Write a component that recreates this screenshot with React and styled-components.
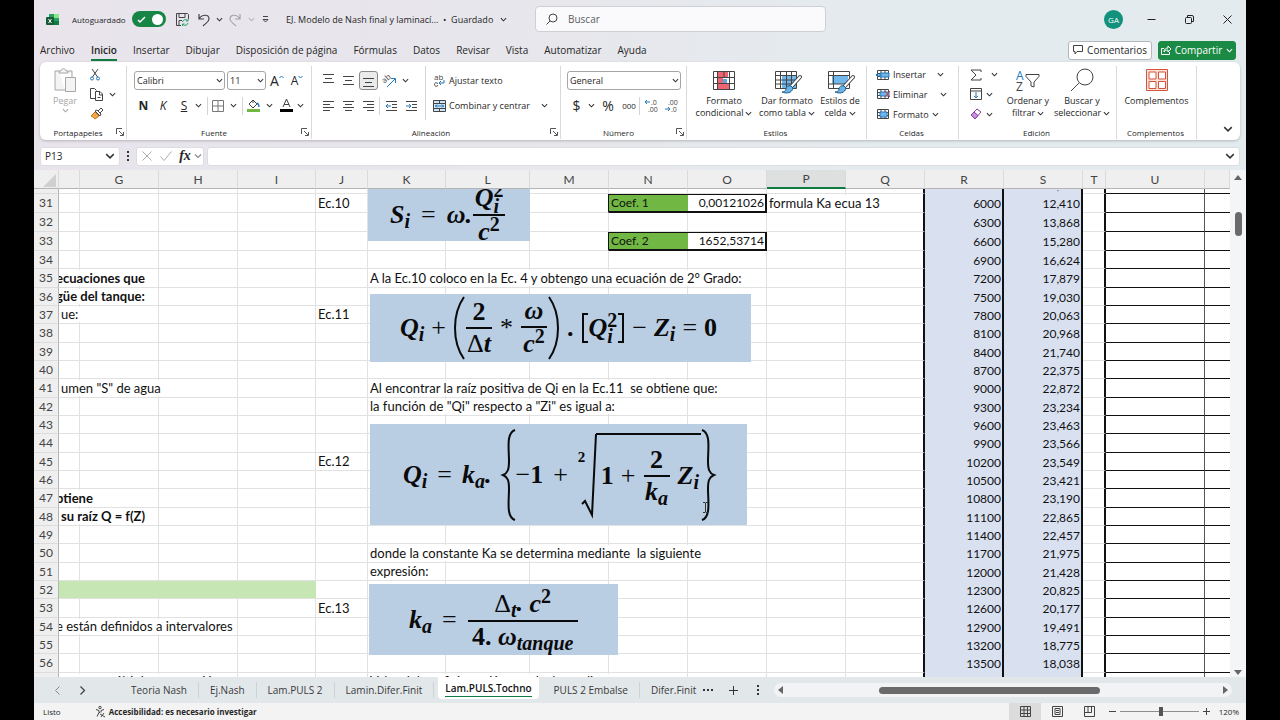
import React from 'react';
import styled, { createGlobalStyle } from 'styled-components';

const GlobalStyle = createGlobalStyle`
	* {
		box-sizing: border-box;
	}
	body {
		margin: 0;
		background: #000;
		color: #262626;
		font-family: "Open Sans", "Noto Sans", sans-serif;
		font-size: 9px;
	}
	button, input, select {
		font: inherit;
		color: inherit;
		margin: 0;
	}
`;

const Window = styled.div`
	display: flex;
	flex-direction: column;
	height: 100vh;
	margin: 0 34px;
	overflow: hidden;
	background: linear-gradient(90deg, #e9e4ec 0%, #e7e7ec 45%, #e4ebee 70%, #e4ebee 100%);
`;

/* ---------- shared ---------- */

const PlainButton = styled.button`
	display: flex;
	align-items: center;
	justify-content: center;
	flex: none;
	padding: 0;
	border: 0;
	background: none;
	white-space: nowrap;
	width: ${props => props.$w ? props.$w + 'px' : 'auto'};
	height: ${props => props.$h ? props.$h + 'px' : 'auto'};
`;

const Svg = styled.svg`
	display: block;
	flex: none;
	fill: none;
	stroke: ${props => props.$c || '#444'};
	stroke-width: 1;
	overflow: visible;
`;

const Icon = ({ w = 16, h = 16, c, children }) => (
	<Svg width={w} height={h} viewBox={`0 0 ${w} ${h}`} $c={c} aria-hidden="true">{children}</Svg>
);

const Chevron = ({ size = 7, c = '#333' }) => (
	<Svg width={size} height={size} viewBox="0 0 8 8" $c={c} aria-hidden="true">
		<path d="M1 2.5 4 5.5 7 2.5" strokeWidth="1.2" />
	</Svg>
);

/* ---------- title bar ---------- */

const TitleBar = styled.header`
	display: flex;
	align-items: center;
	flex: none;
	height: 38px;
`;

const TitleLeft = styled.div`
	display: flex;
	align-items: center;
	flex: 0 0 501px;
	padding-left: 12px;
`;

const AutoSave = styled.label`
	display: flex;
	align-items: center;
	justify-content: space-between;
	width: 94px;
	margin: 0 6px 0 13px;
	font-size: 8px;
`;

const SwitchBox = styled.span`
	display: grid;
	align-items: center;

	input, svg {
		grid-area: 1 / 1;
	}
	svg {
		margin-left: 5px;
		pointer-events: none;
	}
`;

const Switch = styled.input`
	appearance: none;
	display: flex;
	align-items: center;
	justify-content: flex-end;
	width: 34px;
	height: 16px;
	padding: 0 3px;
	border-radius: 8px;
	background: #168546;

	&::after {
		content: "";
		width: 11px;
		height: 11px;
		border-radius: 50%;
		background: #fff;
	}
`;

const FileName = styled.button`
	display: flex;
	align-items: center;
	gap: 4px;
	margin-left: 10px;
	padding: 0;
	border: 0;
	background: none;
	white-space: pre;
`;

const SearchBox = styled.label`
	display: flex;
	align-items: center;
	gap: 10px;
	flex: 0 1 291px;
	height: 26px;
	padding: 0 10px;
	border: 1px solid #cfd0d4;
	border-radius: 4px;
	background: #fafafc;

	input {
		flex: 1;
		min-width: 0;
		padding: 0;
		border: 0;
		outline: 0;
		background: none;
		font-size: 10px;
	}
	input::placeholder {
		color: #5c5c5c;
	}
`;

const WindowButtons = styled.div`
	display: flex;
	align-items: center;
	margin-left: auto;
`;

const Avatar = styled.button`
	width: 19px;
	height: 19px;
	margin-right: 9px;
	padding: 0;
	border: 0;
	border-radius: 50%;
	background: #12917d;
	color: #fff;
	font-size: 8px;
`;

/* ---------- ribbon tabs ---------- */

const TabRow = styled.nav`
	display: flex;
	align-items: center;
	flex: none;
	gap: 16px;
	height: 24px;
	padding: 0 10px 0 6px;
`;

const RibbonTab = styled.button`
	height: 22px;
	padding: 2px 0 0;
	border: 0;
	border-bottom: 2px solid ${props => props.$active ? '#107c41' : 'transparent'};
	background: none;
	font-size: 10px;
	font-weight: ${props => props.$active ? 600 : 400};
	white-space: nowrap;
`;

const TabActions = styled.div`
	display: flex;
	gap: 6px;
	margin-left: auto;
`;

const ActionButton = styled.button`
	display: flex;
	align-items: center;
	justify-content: center;
	gap: 4px;
	width: ${props => props.$primary ? 78 : 84}px;
	height: 19px;
	padding: 0;
	border: 1px solid ${props => props.$primary ? '#1a8a44' : '#b5b7ba'};
	border-radius: 3px;
	background: ${props => props.$primary ? '#1a8a44' : '#fff'};
	color: ${props => props.$primary ? '#fff' : '#262626'};
	font-size: 10px;
`;

/* ---------- ribbon ---------- */

const Ribbon = styled.section`
	display: flex;
	flex: none;
	height: 78px;
	margin: 0 6px;
	border-radius: 6px;
	background: #fff;
	box-shadow: 0 1px 3px rgba(0, 0, 0, 0.22);
`;

const Group = styled.div`
	display: flex;
	flex-direction: column;
	flex: 0 0 ${props => props.$w}px;
	min-width: 0;
	margin: 4px 0 1px;
	border-right: 1px solid #d9d9d9;
`;

const GroupBody = styled.div`
	display: flex;
	flex: 1;
	min-width: 0;
	padding: 0 0 0 ${props => props.$pad || 0}px;
`;

const GroupLabel = styled.div`
	display: flex;
	align-items: center;
	height: 14px;
	padding-right: 2px;
	font-size: 8px;

	span {
		flex: 1;
		text-align: center;
	}
`;

const Stack = styled.div`
	display: flex;
	flex-direction: column;
	flex: none;
	width: ${props => props.$w ? props.$w + 'px' : 'auto'};
	padding-top: ${props => props.$top || 0}px;
`;

const ToolRow = styled.div`
	display: flex;
	align-items: center;
	gap: ${props => props.$gap || 0}px;
	height: ${props => props.$h || 25}px;
`;

const Divider = styled.span`
	width: 1px;
	height: ${props => props.$h || 18}px;
	margin: ${props => props.$m || '0'};
	background: #d4d4d4;
`;

const BigButton = styled.button`
	display: flex;
	flex-direction: column;
	align-items: center;
	flex: none;
	width: ${props => props.$w}px;
	height: 56px;
	padding: 2px 0 0;
	border: 0;
	background: none;
	color: ${props => props.$disabled ? '#a6a6a6' : '#262626'};
	line-height: 12px;

	> span {
		display: flex;
		align-items: center;
		gap: 2px;
		white-space: nowrap;
	}
	> svg {
		margin-bottom: 3px;
	}
`;

const TextButton = styled.button`
	display: flex;
	align-items: center;
	gap: 3px;
	height: 20px;
	padding: 0;
	border: 0;
	background: none;
	white-space: nowrap;
	width: ${props => props.$w ? props.$w + 'px' : 'auto'};

	> svg:last-child:not(:first-child) {
		margin-left: ${props => props.$push ? 'auto' : '0'};
	}
`;

const Letter = styled.span`
	font-size: ${props => props.$size || 12}px;
	font-weight: ${props => props.$bold ? 700 : 400};
	font-style: ${props => props.$italic ? 'italic' : 'normal'};
	text-decoration: ${props => props.$under ? 'underline' : 'none'};
	line-height: 12px;
`;

const SelectWrap = styled.span`
	display: grid;
	align-items: center;
	justify-items: end;
	width: ${props => props.$w}px;

	select, svg {
		grid-area: 1 / 1;
	}
	svg {
		margin-right: 2px;
		pointer-events: none;
	}
`;

const Select = styled.select`
	appearance: none;
	width: 100%;
	height: 19px;
	padding: 0 2px;
	border: 1px solid #a5a5a5;
	border-radius: 3px;
	background: #fff;
`;

const PressedBox = styled.span`
	display: grid;
	place-items: center;
	width: 19px;
	height: 19px;
	border: 1px solid #8a8a8a;
	border-radius: 3px;
	background: #ebebeb;
`;

/* ---------- formula bar ---------- */

const FormulaBar = styled.div`
	display: flex;
	align-items: center;
	flex: none;
	height: 30px;
	padding: 2px 6px 0;
`;

const BarBox = styled.div`
	display: flex;
	align-items: center;
	height: 19px;
	width: ${props => props.$w ? props.$w + 'px' : 'auto'};
	flex: ${props => props.$w ? 'none' : '1'};
	padding: 0 4px;
	border: 1px solid #dcdde0;
	border-radius: 3px;
	background: #fff;

	input {
		flex: 1;
		min-width: 0;
		padding: 0;
		border: 0;
		outline: 0;
		background: none;
		font-size: 10px;
	}
`;

/* ---------- sheet ---------- */

const SheetArea = styled.main`
	position: relative;
	display: flex;
	flex: 1;
	min-height: 0;
	overflow: hidden;
	background: #fff;
`;

const GridClip = styled.div`
	flex: 1;
	min-width: 0;
	overflow: hidden;
`;

const Grid = styled.table`
	width: 100%;
	table-layout: fixed;
	border-collapse: separate;
	border-spacing: 0;
	font-family: Lato, "Open Sans", sans-serif;
	font-size: 12px;
	color: #111;
`;

const ColHead = styled.th`
	height: 19px;
	padding: 0;
	border-right: 1px solid #dadada;
	border-bottom: ${props => props.$on ? '2px solid #107c41' : '1px solid #b4b4b4'};
	background: ${props => props.$on ? '#dedfdf' : '#efefef'};
	color: #444;
	font-weight: 400;
	line-height: 17px;
`;

const RowHead = styled.th`
	position: relative;
	z-index: 2;
	padding: 0;
	border-right: 1px solid #b4b4b4;
	border-bottom: 1px solid #dcdcdc;
	background: #efefef;
	color: #444;
	font-weight: 400;
`;

const SheetRow = styled.tr`
	height: ${props => props.$h}px;
	line-height: ${props => Math.max(props.$h - 3, 2)}px;
`;

const fills = { green: '#70b843', light: '#c6e6b4', blue: '#d9e1f1' };

const Cell = styled.td`
	padding: 0 ${props => props.$right ? 1 : 2}px;
	border-right: ${props => props.$edge || '1px solid #e1e1e1'};
	border-bottom: ${props => props.$base || '1px solid #e1e1e1'};
	border-top: ${props => props.$cap || '0'};
	background: ${props => fills[props.$fill] || 'transparent'};
	text-align: ${props => props.$right ? 'right' : 'left'};
	white-space: pre;
`;

const Peek = styled.div`
	display: flex;
	align-items: flex-end;
	justify-content: ${props => props.$right ? 'flex-end' : 'center'};
	height: 4px;
	overflow: hidden;
	line-height: 16px;
`;

const Spill = styled.span`
	position: relative;
	z-index: 1;
	display: inline-block;
	margin-left: ${props => props.$cut ? -5 : 0}px;
	padding-right: 3px;
	background: #fff;
	font-size: 13px;
	font-weight: ${props => props.$bold ? 700 : 400};
	vertical-align: top;
`;

const VScroll = styled.div`
	display: flex;
	flex-direction: column;
	align-items: center;
	flex: 0 0 16px;
	padding: 4px 0 0;
	background: #f4f5f6;
`;

const VThumb = styled.div`
	width: 7px;
	height: 24px;
	margin: 30px 0 auto;
	border-radius: 4px;
	background: #6a6a6a;
`;

/* ---------- equations floating over the cells ---------- */

const PictureLayer = styled.div`
	position: absolute;
	z-index: 1;
	top: 19px;
	right: 16px;
	bottom: 0;
	left: 25px;
	overflow: hidden;
	pointer-events: none;
`;

const Picture = styled.div`
	position: absolute;
	top: ${props => props.$y}px;
	left: ${props => props.$x}px;
	display: flex;
	align-items: center;
	gap: ${props => props.$gap || 10}px;
	width: ${props => props.$w}px;
	height: ${props => props.$h}px;
	padding-left: ${props => props.$pad || 30}px;
	background: #b9cde3;
	color: #0a0a0a;
	font-family: "Liberation Serif", serif;
	font-size: 26px;
	font-weight: 700;
	font-style: italic;
	line-height: 30px;
	white-space: nowrap;
`;

const Up = styled.span`
	font-style: normal;
`;

const Op = styled.span`
	font-style: normal;
	font-weight: 400;
`;

const Var = styled.span`
	display: inline-flex;
	align-items: center;
`;

const Scripts = styled.span`
	display: inline-flex;
	flex-direction: column;
	justify-content: ${props => props.$sub ? 'flex-end' : 'space-between'};
	height: ${props => props.$sub ? 28 : 32}px;
	font-size: 20px;
	line-height: 16px;
`;

const Frac = styled.span`
	display: inline-flex;
	flex-direction: column;
	align-items: center;
	min-width: ${props => props.$w || 26}px;
	margin: 0 1px;

	> span:first-child {
		width: 100%;
		display: flex;
		justify-content: center;
		border-bottom: 2px solid #0a0a0a;
	}
`;

const Radicand = styled.span`
	display: flex;
	align-items: center;
	gap: 7px;
	height: 84px;
	padding: 0 2px 0 5px;
	border-top: 2px solid #0a0a0a;
`;

const Root = styled.span`
	display: flex;
	align-items: flex-start;
`;

const RootIndex = styled.span`
	font-size: 15px;
	font-style: normal;
	line-height: 16px;
	width: 10px;
	margin-top: 16px;
`;

/* ---------- sheet tabs + status ---------- */

const BottomBar = styled.div`
	display: flex;
	align-items: center;
	flex: none;
	height: 26px;
	background: #e2e7ea;
`;

const TabArrows = styled.div`
	display: flex;
	flex: 0 0 86px;
	padding-left: 11px;
`;

const SheetTab = styled.button`
	height: ${props => props.$active ? 22 : 16}px;
	align-self: ${props => props.$active ? 'flex-start' : 'center'};
	padding: 0 ${props => props.$active ? 7 : 11}px;
	margin: 0 ${props => props.$active ? 4 : 0}px;
	border: 0;
	border-right: ${props => props.$active ? '0' : '1px solid #cdd2d5'};
	border-radius: ${props => props.$active ? '0 0 4px 4px' : '0'};
	background: ${props => props.$active ? '#fff' : 'none'};
	font-size: 10px;
	line-height: 16px;
	font-weight: ${props => props.$active ? 600 : 400};
	color: ${props => props.$active ? '#111' : '#3a3a3a'};
	white-space: nowrap;

	span {
		display: block;
		border-bottom: ${props => props.$active ? '1px solid #107c41' : '0'};
	}
`;

const HScroll = styled.div`
	display: flex;
	align-items: center;
	flex: 1;
	height: 14px;
	margin: 0 14px 0 4px;
	padding: 0 3px;
	border-radius: 7px;
	background: #f1f3f4;
`;

const HThumb = styled.div`
	flex: 0 1 221px;
	height: 7px;
	margin-left: 94px;
	margin-right: auto;
	border-radius: 4px;
	background: #6a6a6a;
`;

const StatusBar = styled.footer`
	display: flex;
	align-items: center;
	flex: none;
	height: 17px;
	padding: 0 7px 0 9px;
	background: #f3f3f3;
	font-size: 8px;
`;

const AccessNote = styled.button`
	display: flex;
	align-items: center;
	gap: 3px;
	margin: 0 auto 0 34px;
	padding: 0;
	border: 0;
	background: none;
	font-weight: 700;
`;

const ViewButton = styled.button`
	display: grid;
	place-items: center;
	width: 32px;
	height: 17px;
	padding: 0;
	border: 0;
	background: ${props => props.$on ? '#dcdcdc' : 'none'};
`;

const Zoom = styled.input`
	appearance: none;
	width: 79px;
	height: 12px;
	background: linear-gradient(#8f8f8f, #8f8f8f) center / 100% 1px no-repeat;

	&::-webkit-slider-thumb {
		appearance: none;
		width: 4px;
		height: 9px;
		background: #555;
	}
`;

const ZoomValue = styled.span`
	width: 26px;
	text-align: right;
`;

/* ---------- icons ---------- */

const Launcher = () => (
	<PlainButton aria-label="Más opciones">
		<Icon w={8} h={8} c="#555"><path d="M.5 6V.5H6M3 3l4 4M7.500 4v3.500H4" /></Icon>
	</PlainButton>
);

const lineSets = {
	top: [[1, 12], [3, 10], [1, 12]],
	left: [[1, 12], [1, 8], [1, 12], [1, 8]],
	center: [[1, 12], [3, 10], [1, 12], [3, 10]],
	right: [[1, 12], [5, 12], [1, 12], [5, 12]],
};

const Lines = ({ kind, shift = 0 }) => {
	const set = lineSets[kind];
	const step = set.length === 3 ? 4 : 3;
	return (
		<Icon w={13} h={12}>
			{set.map((l, i) => <path key={i} d={`M${l[0]} ${i * step + 1.5 + shift}H${l[1]}`} />)}
		</Icon>
	);
};

const Indent = ({ out }) => (
	<Icon w={13} h={12}>
		<path d="M1 1.500H12M7 4.500H12M7 7.500H12M1 10.500H12" />
		<path d={out ? 'M6 6H1M3 4 1 6l2 2' : 'M1 6H6M4 4l2 2-2 2'} stroke="#2477b8" />
	</Icon>
);

const Brush = () => (
	<>
		<path d="M26 7 17 17" stroke="#444" strokeWidth="4" strokeLinecap="round" />
		<path d="M26 7 17 17" stroke="#fff" strokeWidth="2" strokeLinecap="round" />
		<path d="M17 16c-3-1-5 1-5 3s-2 3-4 3c5 2 10 1 11-4z" fill="#69b3e7" stroke="#245d8a" />
	</>
);

const FormatIcon = () => (
	<Icon w={24} h={20}>
		<path d="M5 1h11v5H5zM5 13h13v5H5z" fill="#ee6473" stroke="none" />
		<path d="M5 6h6v7H5z" fill="#ee6473" stroke="none" />
		<path d="M11 8h4v4h-4z" fill="#5fa8dd" stroke="none" />
		<path d="M1.500.500h21v18h-21zM1.500 6.500h21M1.500 12.500h21M5.500.500v18M12 .500v6M17.500.500v18" />
	</Icon>
);

const TableIcon = ({ cell }) => (
	<Icon w={26} h={22}>
		<path d={cell ? 'M5 5h16v9H5z' : 'M8 6h15v12H8z'} fill="#71b7ea" stroke="none" />
		<path d="M1.500 1.500h21v17h-21zM1.500 5.500h21M1.500 14h21M6.500 1.500v17" />
		{!cell && <path d="M1.500 10h21M12.500 1.500v17M17.500 1.500v17" />}
		<Brush />
	</Icon>
);

const CellIcon = ({ kind }) => (
	<Icon w={14} h={12}>
		<path d="M1.500 1.500h11v9h-11zM1.500 4.500h11M1.500 7.500h11M5 1.500v9M9 1.500v9" />
		<path d={kind === 'format' ? 'M4 4h7v5H4z' : 'M4 4h9v4H4z'} fill="#71b7ea" stroke="#2477b8" />
		{kind === 'insert' && <path d="M6 6H0M2 4 0 6l2 2" stroke="#2477b8" />}
		{kind === 'delete' && <path d="m9 3 5 6M14 3 9 9" stroke="#d13438" />}
	</Icon>
);

const Arrow = ({ d }) => (
	<Svg width="8" height="8" viewBox="0 0 8 8" aria-hidden="true"><path d={d} fill="#666" stroke="none" /></Svg>
);

/* ---------- data ---------- */

const ribbonTabs = ['Archivo', 'Inicio', 'Insertar', 'Dibujar', 'Disposición de página', 'Fórmulas', 'Datos', 'Revisar', 'Vista', 'Automatizar', 'Ayuda'];

const columns = [
	['F', 21], ['G', 79], ['H', 79], ['I', 78], ['J', 52], ['K', 78], ['L', 84], ['M', 79], ['N', 79], ['O', 79],
	['P', 79], ['Q', 79], ['R', 79], ['S', 79], ['T', 23], ['U', 99], ['V', null],
];

const flow = ['12,410', '13,868', '15,280', '16,624', '17,879', '19,030', '20,063', '20,968', '21,740', '22,375', '22,872', '23,234', '23,463', '23,566', '23,549', '23,421', '23,190', '22,865', '22,457', '21,975', '21,428', '20,825', '20,177', '19,491', '18,775', '18,038', '17,285'];

const texts = {
	F35: { t: 'ecuaciones que', bold: true, cut: true },
	F36: { t: 'güe del tanque:', bold: true, cut: true },
	F37: { t: 'ue:' },
	F41: { t: 'umen "S" de agua' },
	F47: { t: 'btiene', bold: true, cut: true },
	F48: { t: 'su raíz Q = f(Z)', bold: true },
	F54: { t: 'e están definidos a intervalores', cut: true },
	F57: { t: '   entre múltiplos en sección' },
	J31: { t: 'Ec.10' },
	J37: { t: 'Ec.11' },
	J45: { t: 'Ec.12' },
	J53: { t: 'Ec.13' },
	K35: { t: 'A la Ec.10 coloco en la Ec. 4 y obtengo una ecuación de 2° Grado:' },
	K41: { t: 'Al encontrar la raíz positiva de Qi en la Ec.11  se obtiene que:' },
	K42: { t: 'la función de "Qi" respecto a "Zi" es igual a:' },
	K50: { t: 'donde la constante Ka se determina mediante  la siguiente' },
	K51: { t: 'expresión:' },
	K57: { t: 'Valor del coeficiente Ka se calcula mediante' },
	P31: { t: 'formula Ka ecua 13' },
};

const coefs = { 31: ['Coef. 1', '0,00121026'], 33: ['Coef. 2', '1652,53714'] };

const rows = [30];
for (let i = 31; i <= 57; i++) {
	rows.push(i);
}

const rowHeight = (n) => {
	if (n === 30) return 5;
	if (n < 34) return 19;
	return n % 3 === 2 ? 19 : 18;
};

const BLACK = '1px solid #111';
const THICK = '2px solid #111';

const renderCell = (col, n) => {
	const key = col + n;
	if (col === 'R' || col === 'S') {
		const value = col === 'R' ? String(6000 + (n - 31) * 300) : flow[n - 31] || '11,905';
		return (
			<Cell key={key} $right $fill="blue" $edge={THICK} $base="0">
				{n === 30 ? <Peek $right>{value}</Peek> : value}
			</Cell>
		);
	}
	if (col === 'Q') return <Cell key={key} $edge={THICK} />;
	if (col === 'T') return <Cell key={key} $edge={THICK} />;
	if (col === 'U' || col === 'V') return <Cell key={key} $base={BLACK} $edge={col === 'U' ? '1px solid #555' : '0'} />;
	if (coefs[n] && col === 'M') return <Cell key={key} $edge={BLACK} />;
	if (coefs[n] && col === 'N') return <Cell key={key} $fill="green" $edge="0" $base={THICK} $cap={BLACK}>{coefs[n][0]}</Cell>;
	if (coefs[n] && col === 'O') return <Cell key={key} $right $edge={THICK} $base={THICK} $cap={BLACK}>{coefs[n][1]}</Cell>;
	if (n === 52 && 'FGHI'.includes(col)) return <Cell key={key} $fill="light" $edge="0" />;
	const text = texts[key];
	return (
		<Cell key={key}>
			{text && <Spill $bold={text.bold} $cut={text.cut}>{text.t}</Spill>}
		</Cell>
	);
};

/* ---------- equations ---------- */

const Sub = ({ v, s }) => <Var>{v}<Scripts $sub>{s}</Scripts></Var>;
const QSquared = () => <Var>Q<Scripts><Up>2</Up><span>i</span></Scripts></Var>;
const CSquared = () => <Var>c<Scripts><Up>2</Up></Scripts></Var>;

const Delim = ({ w, h, d }) => (
	<Svg width={w} height={h} viewBox={`0 0 ${w} ${h}`} $c="#0a0a0a" aria-hidden="true"><path d={d} strokeWidth="2" /></Svg>
);

const Equations = () => (
	<PictureLayer>
		<Picture $x={309} $y={-1} $w={162} $h={53} $pad={22} $gap={11}>
			<Sub v="S" s="i" />
			<Op>=</Op>
			<Var>ω.<Frac $w={32}><QSquared /><CSquared /></Frac></Var>
		</Picture>
		<Picture $x={311} $y={105} $w={381} $h={68} $gap={7}>
			<Sub v="Q" s="i" />
			<Op>+</Op>
			<Var>
				<Delim w={12} h={64} d="M11 1C-1 18-1 46 11 63" />
				<Frac><Up>2</Up><Var><Op>Δ</Op>t</Var></Frac>
			</Var>
			<Op>*</Op>
			<Var>
				<Frac><span>ω</span><CSquared /></Frac>
				<Delim w={12} h={64} d="M1 1C13 18 13 46 1 63" />
			</Var>
			<Up>.</Up>
			<Var>
				<Delim w={8} h={30} d="M7 1H2V29H7" />
				<QSquared />
				<Delim w={8} h={30} d="M1 1H6V29H1" />
			</Var>
			<Op>−</Op>
			<Sub v="Z" s="i" />
			<Op>=</Op>
			<Up>0</Up>
		</Picture>
		<Picture $x={311} $y={235} $w={377} $h={101} $pad={33}>
			<Sub v="Q" s="i" />
			<Op>=</Op>
			<Var><Sub v="k" s="a" />.</Var>
			<Var>
				<Delim w={14} h={92} d="M13 1C4 4 7 20 7 32C7 40 6 44 1 46C6 48 7 52 7 60C7 72 4 88 13 91" />
				<Op>−</Op><Up>1</Up>
			</Var>
			<Op>+</Op>
			<Var>
				<Root>
					<RootIndex>2</RootIndex>
					<Delim w={8} h={84} d="M-6 71-3 68 4 82 8 1" />
					<Radicand>
						<Up>1</Up>
						<Op>+</Op>
						<Frac><Up>2</Up><Sub v="k" s="a" /></Frac>
						<Sub v="Z" s="i" />
					</Radicand>
				</Root>
				<Delim w={14} h={92} d="M1 1C10 4 7 20 7 32C7 40 8 44 13 46C8 48 7 52 7 60C7 72 10 88 1 91" />
			</Var>
		</Picture>
		<Picture $x={310} $y={395} $w={249} $h={71} $pad={40}>
			<Sub v="k" s="a" />
			<Op>=</Op>
			<Frac $w={110}>
				<span><Sub v={<Op>Δ</Op>} s="t" />.&nbsp;<CSquared /></span>
				<Var><Up>4.&nbsp;</Up><Sub v="ω" s="tanque" /></Var>
			</Frac>
		</Picture>
	</PictureLayer>
);

const RibbonGroup = ({ w, label, launcher, pad, children }) => (
	<Group $w={w}>
		<GroupBody $pad={pad}>{children}</GroupBody>
		<GroupLabel><span>{label}</span>{launcher && <Launcher />}</GroupLabel>
	</Group>
);

const TitleSection = () => (
	<TitleBar>
		<TitleLeft>
			<Icon w={13} h={13}>
				<path d="M3 1h10v11H3z" fill="#21a366" stroke="none" />
				<path d="M8 1h5v4H8z" fill="#8fe388" stroke="none" />
				<path d="M8 8h5v4H8z" fill="#107c41" stroke="none" />
				<rect x="0" y="4" width="8" height="8" rx="1" fill="#185c37" stroke="none" />
				<path d="m2.500 6 3 4M5.500 6l-3 4" stroke="#fff" />
			</Icon>
			<AutoSave>
				Autoguardado
				<SwitchBox>
					<Switch type="checkbox" role="switch" defaultChecked />
					<Icon w={9} h={9} c="#fff"><path d="m1 5 2 2 5-5" strokeWidth="1.500" /></Icon>
				</SwitchBox>
			</AutoSave>
			<PlainButton $w={20} aria-label="Guardar">
				<Icon w={13} h={13}>
					<path d="M5 12.500H.500V.500h11l1 1V6M3 .500v4h6v-4M3 12V7.500h3" />
					<path d="M6.500 9a3 3 0 0 1 5-1.500M12 6v2h-2M12 10a3 3 0 0 1-5 1.500M6.500 13v-2h2" stroke="#21a366" />
				</Icon>
			</PlainButton>
			<PlainButton $w={24} aria-label="Deshacer">
				<Icon w={12} h={13}><path d="M1 1v5h5M1 6C4 1 11 1 11 6c0 3-3 4-6 7" strokeWidth="1.200" /></Icon>
			</PlainButton>
			<PlainButton $w={6} aria-label="Opciones de deshacer"><Chevron /></PlainButton>
			<PlainButton $w={26} aria-label="Rehacer">
				<Icon w={12} h={13} c="#a5a5a8"><path d="M11 1v5H6M11 6C8 1 1 1 1 6c0 3 3 4 6 7" strokeWidth="1.200" /></Icon>
			</PlainButton>
			<PlainButton $w={6} aria-label="Opciones de rehacer"><Chevron c="#b5b5b8" /></PlainButton>
			<PlainButton $w={22} aria-label="Personalizar barra">
				<Icon w={7} h={7}><path d="M1 .500h5M1 3.500l2.500 2.500L6 3.500z" /></Icon>
			</PlainButton>
			<FileName>EJ. Modelo de Nash final y laminací...  •  Guardado <Chevron /></FileName>
		</TitleLeft>
		<SearchBox>
			<Icon w={12} h={12}><circle cx="7" cy="5" r="4" /><path d="m4 8-3.500 3.500" /></Icon>
			<input type="text" placeholder="Buscar" aria-label="Buscar" />
		</SearchBox>
		<WindowButtons>
			<Avatar>GA</Avatar>
			<PlainButton $w={38} aria-label="Minimizar"><Icon w={9} h={9} c="#222"><path d="M.500 4.500h8" /></Icon></PlainButton>
			<PlainButton $w={38} aria-label="Restaurar">
				<Icon w={9} h={9} c="#222"><rect x=".500" y="2.500" width="6" height="6" rx="1" /><path d="M2.500 2V.500H7q1.500 0 1.500 1.500v4.500H7" /></Icon>
			</PlainButton>
			<PlainButton $w={38} aria-label="Cerrar"><Icon w={9} h={9} c="#222"><path d="m.500.500 8 8M8.500.500l-8 8" /></Icon></PlainButton>
		</WindowButtons>
	</TitleBar>
);

const CollapseButton = styled.button`
	align-self: flex-end;
	margin: 0 7px 6px auto;
	padding: 0;
	border: 0;
	background: none;
`;

const RibbonSection = () => (
	<Ribbon>
		<RibbonGroup w={87} label="Portapapeles" launcher>
			<BigButton $w={50} $disabled>
				<Icon w={22} h={24} c="#a6a6a6">
					<path d="M5 3H1v19h10M14 3h4v6M5 5V3h2c0-3 5-3 5 0h2v2z" fill="#f4f4f4" />
					<path d="M11.500 9.500h10v14h-10z" fill="#f4f4f4" />
				</Icon>
				<span>Pegar</span>
				<Chevron c="#a6a6a6" />
			</BigButton>
			<Stack>
				<ToolRow $h={17}>
					<PlainButton aria-label="Cortar">
						<Icon w={10} h={13}>
							<path d="M2 1 7.500 9M8 1 2.500 9" />
							<circle cx="2" cy="10.500" r="1.500" stroke="#2477b8" /><circle cx="8" cy="10.500" r="1.500" stroke="#2477b8" />
						</Icon>
					</PlainButton>
				</ToolRow>
				<ToolRow $h={22} $gap={6}>
					<PlainButton aria-label="Copiar">
						<Icon w={13} h={13}><path d="M5 10.500H.500V.500h4l2 2" /><path d="M5.500 3.500H10l2.500 2.500v6.500h-7zM9.500 4v3H12M7.500 9.500h3" /></Icon>
					</PlainButton>
					<Chevron />
				</ToolRow>
				<ToolRow $h={18}>
					<PlainButton aria-label="Copiar formato">
						<Icon w={13} h={12}>
							<path d="M5 4 1 8c2 0 2 2 4 3l4-3z" fill="#f2a54a" stroke="#c87412" />
							<path d="m5 3 5 5 1-2-4-4zM8 3l3-3 2 2-3 3" fill="#fff" />
						</Icon>
					</PlainButton>
				</ToolRow>
			</Stack>
		</RibbonGroup>

		<RibbonGroup w={185} label="Fuente" launcher pad={7}>
			<Stack $top={2}>
				<ToolRow $gap={2}>
					<SelectWrap $w={91}><Select aria-label="Fuente"><option>Calibri</option></Select><Chevron /></SelectWrap>
					<SelectWrap $w={39}><Select aria-label="Tamaño"><option>11</option></Select><Chevron /></SelectWrap>
					<PlainButton $w={18} aria-label="Aumentar tamaño"><Letter $size={14}>A</Letter><Icon w={5} h={12} c="#2477b8"><path d="M.500 3 2.500 1l2 2" /></Icon></PlainButton>
					<PlainButton $w={18} aria-label="Disminuir tamaño"><Letter $size={12}>A</Letter><Icon w={5} h={12} c="#2477b8"><path d="M.500 1 2.500 3l2-2" /></Icon></PlainButton>
				</ToolRow>
				<ToolRow>
					<PlainButton $w={19}><Letter $bold>N</Letter></PlainButton>
					<PlainButton $w={20}><Letter $italic>K</Letter></PlainButton>
					<PlainButton $w={22}><Letter $under>S</Letter></PlainButton>
					<Chevron />
					<Divider $m="0 3px 0 5px" />
					<PlainButton $w={14} aria-label="Bordes"><Icon w={12} h={12}><path d="M.500.500h11v11H.500zM6 .500v11M.500 6h11" stroke="#777" /></Icon></PlainButton>
					<PlainButton $w={17} aria-label="Opciones de bordes"><Chevron /></PlainButton>
					<Divider />
					<PlainButton $w={20} aria-label="Color de relleno">
						<Icon w={13} h={13}>
							<path d="m2 5 4-4 4 4-4 4zM6 1v3" /><path d="M10 4c2 1 2 3 2 4" stroke="#2477b8" strokeWidth="1.500" />
							<path d="M0 10h13v3H0z" fill="#70b843" stroke="none" />
						</Icon>
					</PlainButton>
					<PlainButton $w={12} aria-label="Opciones de relleno"><Chevron /></PlainButton>
					<PlainButton $w={22} aria-label="Color de fuente">
						<Icon w={13} h={13}><path d="m3 8 3.500-8L10 8M4 5.500h5" /><path d="M0 10h13v3H0z" fill="#000" stroke="none" /></Icon>
					</PlainButton>
					<Chevron />
				</ToolRow>
			</Stack>
		</RibbonGroup>

		<RibbonGroup w={249} label="Alineación" launcher pad={6}>
			<Stack $w={107} $top={2}>
				<ToolRow>
					<PlainButton $w={20} aria-label="Alinear arriba"><Lines kind="top" shift={-2} /></PlainButton>
					<PlainButton $w={20} aria-label="Alinear en medio"><Lines kind="top" /></PlainButton>
					<PlainButton $w={20} aria-label="Alinear abajo"><PressedBox><Lines kind="top" shift={2} /></PressedBox></PlainButton>
					<PlainButton $w={24} aria-label="Orientación">
						<Icon w={14} h={13}>
							<text x="0" y="8" fontSize="8" fill="#444" stroke="none" transform="rotate(-40 3 7)">ab</text>
							<path d="M4 13 12 5M8 4.500h4.500V9" stroke="#2477b8" />
						</Icon>
					</PlainButton>
					<Chevron />
				</ToolRow>
				<ToolRow>
					<PlainButton $w={20} aria-label="Izquierda"><Lines kind="left" /></PlainButton>
					<PlainButton $w={20} aria-label="Centrar"><Lines kind="center" /></PlainButton>
					<PlainButton $w={20} aria-label="Derecha"><Lines kind="right" /></PlainButton>
					<Divider $m="0 1px" />
					<PlainButton $w={20} aria-label="Disminuir sangría"><Indent out /></PlainButton>
					<PlainButton $w={20} aria-label="Aumentar sangría"><Indent /></PlainButton>
				</ToolRow>
			</Stack>
			<Divider $h={54} $m="0 7px 0 0" />
			<Stack $w={115} $top={2}>
				<ToolRow>
					<TextButton>
						<Icon w={13} h={13}>
							<text x="1" y="6" fontSize="8" fill="#444" stroke="none">ab</text>
							<path d="M5 9.500C3 8 1.500 9 1.500 10.500S3 13 5 11.500" />
							<path d="M11 6v3H6M8 7 6 9l2 2" stroke="#2477b8" />
						</Icon>
						Ajustar texto
					</TextButton>
				</ToolRow>
				<ToolRow>
					<TextButton $w={115} $push>
						<Icon w={13} h={12}>
							<path d="M.500.500h12v11H.500z" fill="#cfe6f7" /><path d="M.500 3.500h12M.500 8.500h12M6.500.500v3M6.500 8.500v3" />
							<path d="M2 6h9M4 4.500 2.500 6 4 7.500M9 4.500 10.500 6 9 7.500" stroke="#2477b8" />
						</Icon>
						Combinar y centrar
						<Chevron />
					</TextButton>
				</ToolRow>
			</Stack>
		</RibbonGroup>

		<RibbonGroup w={126} label="Número" launcher pad={6}>
			<Stack $top={2}>
				<ToolRow>
					<SelectWrap $w={114}><Select aria-label="Formato de número"><option>General</option></Select><Chevron /></SelectWrap>
				</ToolRow>
				<ToolRow>
					<PlainButton $w={19}><Letter $size={14}>$</Letter></PlainButton>
					<PlainButton $w={10} aria-label="Opciones de moneda"><Chevron /></PlainButton>
					<PlainButton $w={24}><Letter $size={14}>%</Letter></PlainButton>
					<PlainButton $w={18}><Letter $size={8}>000</Letter></PlainButton>
					<Divider $m="0 1px" />
					{[false, true].map(less => (
						<PlainButton key={String(less)} $w={20} aria-label={less ? 'Menos decimales' : 'Más decimales'}>
							<Icon w={13} h={13}>
								<text x={less ? 3 : 6} y="6" fontSize="7" fill="#444" stroke="none">{less ? '.00' : '.0'}</text>
								<text x={less ? 6 : 3} y="13" fontSize="7" fill="#444" stroke="none">{less ? '.0' : '.00'}</text>
								<path d={less ? 'M0 10h5M3 8l2 2-2 2' : 'M5 3H0M2 1 0 3l2 2'} stroke="#2477b8" />
							</Icon>
						</PlainButton>
					))}
				</ToolRow>
			</Stack>
		</RibbonGroup>

		<RibbonGroup w={180} label="Estilos" pad={4}>
			<BigButton $w={66}><Icon w={24} h={24}><g transform="translate(0 3)"><FormatIcon /></g></Icon><span>Formato</span><span>condicional <Chevron /></span></BigButton>
			<BigButton $w={60}><Icon w={26} h={24}><g transform="translate(0 2)"><TableIcon /></g></Icon><span>Dar formato</span><span>como tabla <Chevron /></span></BigButton>
			<BigButton $w={46}><Icon w={26} h={24}><g transform="translate(0 2)"><TableIcon cell /></g></Icon><span>Estilos de</span><span>celda <Chevron /></span></BigButton>
		</RibbonGroup>

		<RibbonGroup w={92} label="Celdas" pad={9}>
			<Stack>
				<ToolRow $h={17}><TextButton $w={68} $push><CellIcon kind="insert" />Insertar<Chevron /></TextButton></ToolRow>
				<ToolRow $h={22}><TextButton $w={71} $push><CellIcon kind="delete" />Eliminar<Chevron /></TextButton></ToolRow>
				<ToolRow $h={18}><TextButton><CellIcon kind="format" />Formato<Chevron /></TextButton></ToolRow>
			</Stack>
		</RibbonGroup>

		<RibbonGroup w={158} label="Edición" pad={11}>
			<Stack $w={31}>
				<ToolRow $h={17} $gap={9}><Icon w={12} h={12}><path d="M11 3V1H1l5 5-5 5h10V9" /></Icon><Chevron /></ToolRow>
				<ToolRow $h={22} $gap={4}><Icon w={12} h={12}><path d="M.500.500h11v11H.500zM.500 3h11" /><path d="M6 4v6M4 8l2 2 2-2" stroke="#2477b8" /></Icon><Chevron /></ToolRow>
				<ToolRow $h={18} $gap={4}><Icon w={12} h={12} c="#8a3aa0"><path d="m1 7 6-6 4 3-6 7z" fill="#fff" /><path d="m1 7 3-3 4 3.500L5 11z" fill="#c890d8" /></Icon><Chevron /></ToolRow>
			</Stack>
			<BigButton $w={54}>
				<Icon w={24} h={24}>
					<text x="0" y="12" fontSize="12" fill="#2477b8" stroke="none">A</text>
					<text x="0" y="23" fontSize="12" fill="#444" stroke="none">Z</text>
					<path d="M10 6.500h13v2L18 14v5l-3-1v-4l-5-5.500z" />
				</Icon>
				<span>Ordenar y</span><span>filtrar <Chevron /></span>
			</BigButton>
			<BigButton $w={54}>
				<Icon w={24} h={24}><circle cx="15" cy="9" r="8" /><path d="M9 15 1 23" /></Icon>
				<span>Buscar y</span><span>seleccionar <Chevron /></span>
			</BigButton>
		</RibbonGroup>

		<RibbonGroup w={80} label="Complementos">
			<BigButton $w={79}>
				<Icon w={22} h={24} c="#d3543a">
					<path d="M.500 1.500h21v21H.500z" fill="#fbe3dc" />
					<path d="M3 4h7v7H3zM12.500 4h7v7h-7zM3 13.500h7v7H3zM12.500 13.500h7v7h-7z" fill="#fff" />
				</Icon>
				<span>Complementos</span>
			</BigButton>
		</RibbonGroup>
		<CollapseButton aria-label="Contraer la cinta"><Chevron size={10} /></CollapseButton>
	</Ribbon>
);

const Fx = styled.span`
	font-family: "Liberation Serif", serif;
	font-size: 14px;
	font-style: italic;
	font-weight: 700;
	line-height: 14px;
`;

const LastTab = styled(SheetTab)`
	border-right: 0;
	padding-right: 0;
`;

const TextCursor = styled.div`
	position: absolute;
	z-index: 3;
	top: 332px;
	left: 669px;
`;

const App = () => (
	<Window>
		<GlobalStyle />
		<TitleSection />
		<TabRow>
			{ribbonTabs.map(tab => <RibbonTab key={tab} $active={tab === 'Inicio'}>{tab}</RibbonTab>)}
			<TabActions>
				<ActionButton>
					<Icon w={10} h={10}><path d="M.500.500h9v6H4L2 9V6.500H.500z" /></Icon>
					Comentarios
				</ActionButton>
				<ActionButton $primary>
					<Icon w={10} h={10} c="#fff"><path d="M3 3.500H.500v6h8V7M3 7c0-3 2-4 4-4V1l3 3-3 3V5C5 5 4 5.500 3 7z" /></Icon>
					Compartir
					<Chevron c="#fff" />
				</ActionButton>
			</TabActions>
		</TabRow>
		<RibbonSection />
		<FormulaBar>
			<BarBox $w={80}><input defaultValue="P13" aria-label="Cuadro de nombres" /><Chevron size={10} /></BarBox>
			<PlainButton $w={16} aria-label="Cambiar tamaño"><Icon w={2} h={10} c="#333"><path d="M1 0v2M1 4v2M1 8v2" strokeWidth="2" /></Icon></PlainButton>
			<BarBox $w={68}>
				<PlainButton $w={12} aria-label="Cancelar"><Icon w={10} h={10} c="#aaa"><path d="m.500.500 9 9M9.500.500l-9 9" /></Icon></PlainButton>
				<PlainButton $w={25} aria-label="Introducir"><Icon w={12} h={10} c="#aaa"><path d="m.500 5.500 3.500 4 7.500-9" /></Icon></PlainButton>
				<PlainButton $w={14}><Fx>fx</Fx></PlainButton>
				<PlainButton $w={12} aria-label="Funciones"><Chevron size={8} c="#888" /></PlainButton>
			</BarBox>
			<PlainButton as="span" $w={3} />
			<BarBox><input aria-label="Barra de fórmulas" /><Chevron size={10} /></BarBox>
		</FormulaBar>
		<SheetArea>
			<GridClip>
				<Grid>
					<colgroup>
						<col width="25" />
						{columns.map(([name, w]) => <col key={name} width={w || undefined} />)}
					</colgroup>
					<thead>
						<tr>
							<ColHead><Icon w={22} h={17}><path d="M22 3v13H9z" fill="#d0d0d0" stroke="none" /></Icon></ColHead>
							{columns.map(([name]) => (
								<ColHead key={name} $on={name === 'P'}>{name === 'F' || name === 'V' ? '' : name}</ColHead>
							))}
						</tr>
					</thead>
					<tbody>
						{rows.map(n => (
							<SheetRow key={n} $h={rowHeight(n)}>
								<RowHead scope="row">{n === 30 ? <Peek>30</Peek> : n}</RowHead>
								{columns.map(([name]) => renderCell(name, n))}
							</SheetRow>
						))}
					</tbody>
				</Grid>
			</GridClip>
			<Equations />
			<VScroll>
				<Arrow d="M4 1 8 6H0z" />
				<VThumb />
				<Arrow d="M4 6 8 1H0z" />
			</VScroll>
			<TextCursor>
				<Icon w={5} h={11} c="#333"><path d="M0 .500h2l.500 1 .500-1h2M2.500 1v9M0 10.500h2l.500-1 .500 1h2" /></Icon>
			</TextCursor>
		</SheetArea>
		<BottomBar>
			<TabArrows>
				<PlainButton $w={25} aria-label="Anterior"><Icon w={5} h={9} c="#888"><path d="M4.500.500.500 4.500l4 4" /></Icon></PlainButton>
				<PlainButton $w={25} aria-label="Siguiente"><Icon w={5} h={9}><path d="m.500.500 4 4-4 4" strokeWidth="1.300" /></Icon></PlainButton>
			</TabArrows>
			{['Teoria Nash', 'Ej.Nash', 'Lam.PULS 2', 'Lamin.Difer.Finit', 'Lam.PULS.Tochno', 'PULS 2 Embalse'].map(name => (
				<SheetTab key={name} $active={name === 'Lam.PULS.Tochno'}><span>{name}</span></SheetTab>
			))}
			<LastTab><span>Difer.Finit</span></LastTab>
			<PlainButton $w={24} aria-label="Más hojas"><Icon w={10} h={2} c="#333"><path d="M0 1h2M4 1h2M8 1h2" strokeWidth="2" /></Icon></PlainButton>
			<PlainButton $w={26} aria-label="Hoja nueva"><Icon w={9} h={9} c="#333"><path d="M4.500 0v9M0 4.500h9" /></Icon></PlainButton>
			<PlainButton $w={24} aria-label="Separador"><Icon w={2} h={10} c="#333"><path d="M1 0v2M1 4v2M1 8v2" strokeWidth="2" /></Icon></PlainButton>
			<HScroll>
				<Arrow d="M1 4 6 0v8z" />
				<HThumb />
				<Arrow d="M7 4 2 0v8z" />
			</HScroll>
		</BottomBar>
		<StatusBar>
			Listo
			<AccessNote>
				<Icon w={11} h={11}><circle cx="5" cy="1.500" r="1.200" /><path d="M1 3.500l3 1v2L2 10.500M9 3.500l-3 1v2M4 7l1-1M5 8l5 3M9 7l-3 4" /></Icon>
				Accesibilidad: es necesario investigar
			</AccessNote>
			<ViewButton $on aria-label="Normal"><Icon w={11} h={11}><path d="M.500.500h10v10H.500zM.500 4h10M.500 7.500h10M4 .500v10M7.500.500v10" /></Icon></ViewButton>
			<ViewButton aria-label="Diseño de página"><Icon w={11} h={11}><path d="M.500.500h10v10H.500zM3 2.500h5v6H3zM4 4.500h3M4 6.500h3" /></Icon></ViewButton>
			<ViewButton aria-label="Salto de página"><Icon w={11} h={11}><path d="M.500.500h10v10H.500zM4 .500v6M7.500.500v6H.500" /></Icon></ViewButton>
			<PlainButton $w={15} aria-label="Alejar"><Icon w={7} h={7}><path d="M0 3.500h7" /></Icon></PlainButton>
			<Zoom type="range" min="10" max="220" defaultValue="120" aria-label="Zoom" />
			<PlainButton $w={14} aria-label="Acercar"><Icon w={7} h={7}><path d="M0 3.500h7M3.500 0v7" /></Icon></PlainButton>
			<ZoomValue>120%</ZoomValue>
		</StatusBar>
	</Window>
);

export default App;
